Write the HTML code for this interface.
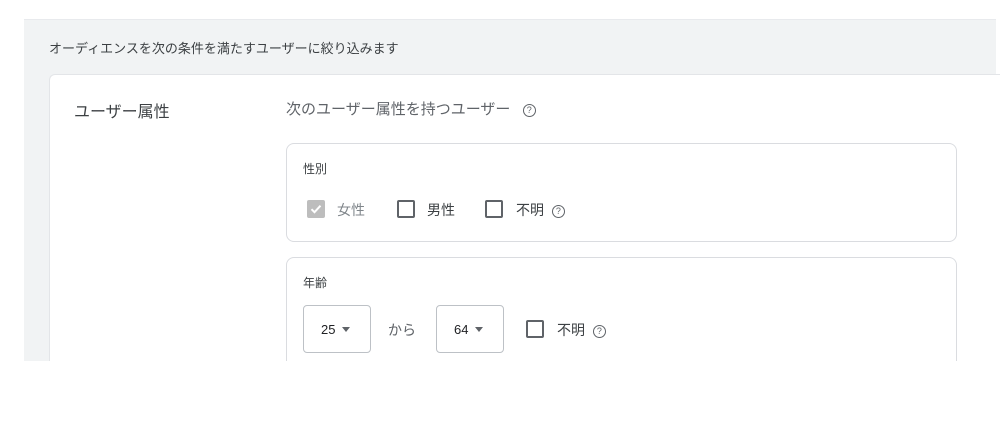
<!DOCTYPE html>
<html><head><meta charset="utf-8"><style>
body{margin:0;width:1000px;height:446px;background:#fff;position:relative;overflow:hidden;font-family:"Liberation Sans","Noto Sans CJK JP",sans-serif;color:#3c4043}
.a{position:absolute}
.cb{position:absolute;width:14px;height:14px;border:2px solid #5f6368;border-radius:2px}
.q{display:inline-block;width:11px;height:11px;border:1.2px solid #5f6368;border-radius:50%;font-size:9px;line-height:11px;text-align:center;color:#5f6368;vertical-align:1px;margin-left:4px}
.sel{position:absolute;border:1px solid #bdc1c6;border-radius:4px;height:48px;font-size:13px;color:#202124;line-height:48px;box-sizing:border-box;padding-left:17px}
.tri{display:inline-block;width:0;height:0;border-left:4.5px solid transparent;border-right:4.5px solid transparent;border-top:5px solid #5f6368;vertical-align:2px;margin-left:7px}
</style></head><body>
<div class="a" style="left:24px;top:19px;width:972px;height:342px;background:#f1f3f4;border-top:1px solid #e8eaed"></div>
<div class="a" style="left:49px;top:74px;width:960px;height:287px;background:#fff;border-left:1px solid #e3e5e8;border-top:1px solid #e3e5e8;border-radius:6px 0 0 0"></div>
<div class="a" style="left:49px;top:38px;font-size:13px;color:#3c4043">オーディエンスを次の条件を満たすユーザーに絞り込みます</div>
<div class="a" style="left:74px;top:98px;font-size:16px;color:#3c4043">ユーザー属性</div>
<div class="a" style="left:286px;top:98px;font-size:15px;color:#5f6368">次のユーザー属性を持つユーザー &nbsp;<span class="q">?</span></div>
<div class="a" style="left:286px;top:143px;width:669px;height:97px;border:1px solid #dadce0;border-radius:8px"></div>
<div class="a" style="left:303px;top:160px;font-size:12px;color:#3c4043">性別</div>
<div class="cb" style="left:307px;top:200px;background:#bdbdbd;border-color:#bdbdbd"><svg width="14" height="14" viewBox="0 0 14 14"><path d="M2.5 7.2l3 3 6-6.5" stroke="#fff" stroke-width="2" fill="none"/></svg></div>
<div class="a" style="left:337px;top:200px;font-size:14px;color:#80868b">女性</div>
<div class="cb" style="left:397px;top:200px"></div>
<div class="a" style="left:427px;top:200px;font-size:14px;color:#3c4043">男性</div>
<div class="cb" style="left:485px;top:200px"></div>
<div class="a" style="left:516px;top:200px;font-size:14px;color:#3c4043">不明 <span class="q">?</span></div>
<div class="a" style="left:286px;top:257px;width:669px;height:120px;border:1px solid #dadce0;border-radius:8px"></div>
<div class="a" style="left:303px;top:274px;font-size:12px;color:#3c4043">年齢</div>
<div class="sel" style="left:303px;top:305px;width:68px">25<span class="tri"></span></div>
<div class="a" style="left:388px;top:320px;font-size:14px;color:#5f6368">から</div>
<div class="sel" style="left:436px;top:305px;width:68px">64<span class="tri"></span></div>
<div class="cb" style="left:526px;top:320px"></div>
<div class="a" style="left:557px;top:320px;font-size:14px;color:#3c4043">不明 <span class="q">?</span></div>
<div class="a" style="left:0;top:361px;width:1000px;height:85px;background:#fff"></div>
</body></html>
